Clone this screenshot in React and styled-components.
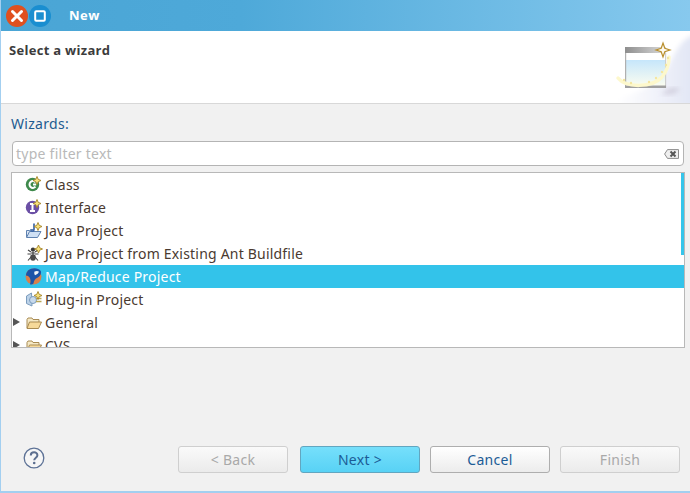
import React from 'react';
import styled, { createGlobalStyle } from 'styled-components';

const Global = createGlobalStyle`
  html, body { margin: 0; padding: 0; background: #f1f1f1; }
  * { box-sizing: border-box; }
`;

const Win = styled.div`
  width: 690px; height: 493px; display: flex; flex-direction: column; overflow: hidden;
  font-family: "Noto Sans", "Open Sans", sans-serif; font-size: 14px;
  background: #f1f1f1; border-left: 1px solid #a3cff0; border-bottom: 2px solid #a3cff0;
`;
const TitleBar = styled.div`
  height: 31px; flex: none; margin-left: -1px; display: flex; align-items: center; padding-left: 6px; gap: 1px;
  background: linear-gradient(90deg, #4aa5d5 0%, #4ea9d9 35%, #87c9ee 100%);
`;
const CircleBtn = styled.div`
  width: 22px; height: 22px; border-radius: 50%; background: ${p => p.$bg};
  display: flex; align-items: center; justify-content: center;
`;
const Title = styled.div`
  color: #fff; font-weight: 700; font-size: 13px; margin: -2px 0 0 17px; letter-spacing: .5px;
  font-family: "Open Sans", sans-serif;
`;
const Header = styled.div`
  height: 73px; flex: none; background: #fff; border-bottom: 1px solid #d8d8d8;
  display: flex; justify-content: space-between; position: relative;
`;
const HeaderTitle = styled.div`
  font-weight: 700; font-size: 13px; color: #3c3c3c; padding: 10px 0 0 8px; line-height: 18px; letter-spacing: .3px;
  font-family: "Open Sans", sans-serif;
`;
const Banner = styled.svg`
  display: block; width: 75px; height: 72px;
`;
const Body = styled.div`
  flex: 1; display: flex; flex-direction: column; padding: 0 5px 0 10px; min-height: 0;
`;
const Label = styled.div`
  color: #1d5b90; font-size: 14px; line-height: 20px; margin: 10px 0 0 0; letter-spacing: .3px;
`;
const Filter = styled.div`
  height: 25px; margin: 7px 1px 0 1px; background: #fff; border: 1px solid #b4b4b4; border-radius: 4px;
  display: flex; align-items: center; justify-content: space-between; padding: 0 4px 0 3px;
  color: #b9b9b9; font-size: 14px; letter-spacing: .25px;
`;
const Tree = styled.div`
  height: 176px; margin-top: 6px; background: #fff; border: 1px solid #b8b8b8;
  overflow: hidden; position: relative;
`;
const Row = styled.div`
  height: 23px; flex: none; display: flex; align-items: center; position: relative; padding-left: 33px;
  background: ${p => p.$sel ? '#33c3ea' : 'transparent'};
  color: ${p => p.$sel ? '#fff' : '#4a3a30'}; font-size: 14px; white-space: nowrap; letter-spacing: .2px;
`;
const RowIcon = styled.svg`
  position: absolute; left: 13px; top: 3px; width: 18px; height: 17px;
`;
const Twisty = styled.div`
  position: absolute; left: 1px; top: 7px; width: 0; height: 0;
  border-left: 7px solid #555; border-top: 4.500px solid transparent; border-bottom: 4.500px solid transparent;
`;
const Scrollbar = styled.div`
  position: absolute; right: 0; top: 0; width: 3px; height: 82px; background: #35c5ea;
`;
const Footer = styled.div`
  margin-top: auto; height: 63px; display: flex; align-items: flex-start; padding: 18px 0 0 12px;
`;
const Help = styled.svg`
  width: 22px; height: 22px; margin-top: 1px; display: block;
`;
const Buttons = styled.div`
  margin-left: auto; display: flex; gap: 10px; margin-right: 5px;
`;
const Btn = styled.div`
  width: ${p => p.$w || 120}px; height: 27px; border-radius: 3px; display: flex; align-items: center; justify-content: center;
  font-size: 14px; letter-spacing: .3px;
  ${p => p.$variant === 'primary' ? `
    background: linear-gradient(#76dffb, #58d2f5); border: 1px solid #62a6c0; color: #1c5c96; margin-left: 2px;
  ` : p.$variant === 'normal' ? `
    background: linear-gradient(#ffffff, #ececec); border: 1px solid #aeaeae; color: #1c5c96;
  ` : `
    background: linear-gradient(#fafafa, #ebebeb); border: 1px solid #cfcfcf; color: #a9a9a9;
  `}
`;

const Star = ({ x = 12, y = 4.5 }) => (
  <path d={`M${x} ${y - 4}l1.200 2.800 2.800 1.200-2.800 1.200-1.200 2.800-1.200-2.800-2.800-1.200 2.800-1.200z`} fill="#f7e27c" stroke="#a5842a" strokeWidth=".9" />
);

const ClassIcon = () => (
  <RowIcon viewBox="0 0 18 17">
    <circle cx="7.500" cy="8.500" r="6.700" fill="#3f8a4c" />
    <path d="M10.500 6.300a3.400 3.400 0 1 0 0 4.400M8 8.500h3.200" fill="none" stroke="#fff" strokeWidth="2" />
    <Star />
  </RowIcon>
);
const InterfaceIcon = () => (
  <RowIcon viewBox="0 0 18 17">
    <circle cx="7.500" cy="8.500" r="6.700" fill="#6b4fa5" />
    <path d="M5 5h5M5 12h5M7.500 5v7" stroke="#fff" strokeWidth="2" fill="none" />
    <Star />
  </RowIcon>
);
const ProjectIcon = () => (
  <RowIcon viewBox="0 0 18 17">
    <path d="M1.500 15V8.500h3l1-1h3v2" fill="#dbe6f4" stroke="#5f82b0" />
    <path d="M1.500 15.500l3-6h11.500l-3.500 6z" fill="#cfe0f4" stroke="#5f82b0" />
    <path d="M9 1.500v6c0 2-2.500 2-3.500.8" fill="none" stroke="#3d68a8" strokeWidth="1.700" />
    <Star x={13} y={4.500} />
  </RowIcon>
);
const AntIcon = () => (
  <RowIcon viewBox="0 0 18 17">
    <ellipse cx="8" cy="4.500" rx="2.200" ry="2" fill="#3a3a3a" />
    <ellipse cx="8" cy="8" rx="1.800" ry="1.800" fill="#666" />
    <ellipse cx="8" cy="12.500" rx="2.800" ry="3.200" fill="#4a4a4a" />
    <path d="M6 7L3 5M10 7l3-2M6 9H2.500M10 9h3.500M6 12l-3 3.500M10 12l3 3.500" stroke="#444" strokeWidth="1.100" fill="none" />
    <Star x={13.500} y={4} />
  </RowIcon>
);
const MapReduceIcon = () => (
  <RowIcon viewBox="0 0 18 17">
    <circle cx="8.500" cy="8.500" r="8" fill="#d9804a" />
    <path d="M3 2.500C7-.5 13-.5 15.800 3c1 3-1 6-3.800 7-2 .8-3 2.500-3.500 5.500-1 1-2.500 1.200-3.500.8C6.500 12 5 8 1 7.500c0-2 .8-3.500 2-5z" fill="#1c54a8" />
    <path d="M9.500 3.500c1.500-.7 3.500-.7 4.300 0 0 1.800-1.800 3-3.800 3.700-.8-1-.9-2.500-.5-3.700z" fill="#f1f5f8" />
  </RowIcon>
);
const PluginIcon = () => (
  <RowIcon viewBox="0 0 18 17">
    <path d="M1.500 5l5-3 .5 13-5.500-2.500z" fill="#bcd2e8" stroke="#7b9cbd" />
    <circle cx="8" cy="9" r="3.500" fill="#c7d9ec" stroke="#7b9cbd" />
    <path d="M11 7.500h5.500M11 10.500h5.500" stroke="#b9a657" strokeWidth="1.400" />
    <Star x={13} y={4.500} />
  </RowIcon>
);
const FolderIcon = () => (
  <RowIcon viewBox="0 0 18 17">
    <path d="M2 14V5.500l1-1.500h4l1 1.500h6v3" fill="#f5e9c6" stroke="#a98b52" />
    <path d="M2 14.500l2.500-6.500h12l-3 6.500z" fill="#f6d999" stroke="#a98b52" />
  </RowIcon>
);

const rows = [
  ['Class', ClassIcon], ['Interface', InterfaceIcon], ['Java Project', ProjectIcon],
  ['Java Project from Existing Ant Buildfile', AntIcon],
  ['Map/Reduce Project', MapReduceIcon, 'sel'], ['Plug-in Project', PluginIcon],
  ['General', FolderIcon, 'tw'], ['CVS', FolderIcon, 'tw'],
];

const sparkles = [[9, 49], [16, 52], [34, 51], [41, 47], [47, 41], [51, 34], [53, 27]];

export default function App() {
  return (
    <Win>
      <Global />
      <TitleBar>
        <CircleBtn $bg="#e0501f">
          <svg width="14" height="14" viewBox="0 0 14 14"><path d="M2.500 2.500l9 9M11.500 2.500l-9 9" stroke="#fff" strokeWidth="3" strokeLinecap="round" /></svg>
        </CircleBtn>
        <CircleBtn $bg="#1a8ed0">
          <svg width="12" height="12" viewBox="0 0 12 12"><rect x="1.200" y="1.200" width="9.600" height="9.600" rx="1" fill="none" stroke="#fff" strokeWidth="2" /></svg>
        </CircleBtn>
        <Title>New</Title>
      </TitleBar>
      <Header>
        <HeaderTitle>Select a wizard</HeaderTitle>
        <Banner viewBox="0 0 75 72">
          <defs>
            <linearGradient id="bg" x1="0" y1="0" x2="1" y2="0"><stop offset="0" stopColor="#fff" /><stop offset=".6" stopColor="#eef0f9" /><stop offset="1" stopColor="#e0e5f4" /></linearGradient>
            <linearGradient id="pane" x1="0" y1="0" x2="0" y2="1"><stop offset="0" stopColor="#c6e6fb" /><stop offset="1" stopColor="#fbfdf0" /></linearGradient>
            <linearGradient id="bar" x1="0" y1="0" x2="1" y2="0"><stop offset="0" stopColor="#8e8e8e" /><stop offset="1" stopColor="#dcdcdc" /></linearGradient>
            <filter id="soft" x="-20%" y="-20%" width="140%" height="140%"><feGaussianBlur stdDeviation="2.500" /></filter>
          </defs>
          <path d="M80 4C62 8 58 30 48 44 38 56 20 62 2 68v8h78z" fill="url(#bg)" filter="url(#soft)" />
          <path d="M52 58c6-1 10-2 13 0l-6 5-13 1z" fill="#c4c0d0" opacity=".6" filter="url(#soft)" />
          <rect x="10" y="16" width="41" height="6" fill="url(#bar)" />
          <rect x="10" y="22" width="41" height="35" fill="#fff" />
          <rect x="11" y="29" width="39" height="26" fill="url(#pane)" />
          <rect x="10" y="22" width="1.200" height="35" fill="#b0b0b0" />
          <rect x="50" y="22" width="1.200" height="35" fill="#cfcfcf" />
          <rect x="10" y="54.500" width="41" height="2.500" fill="#a0a0a0" />
          <path d="M3 47c8 10 34 10 44-1 5-6 7-12 7-20" fill="none" stroke="#fdf8cc" strokeWidth="3.500" strokeLinecap="round" />
          {sparkles.map(([x, y]) => <circle key={x} cx={x} cy={y} r="1.200" fill="#f4e6a0" />)}
          <path d="M48 12l1.800 5.200 5.200 1.800-5.200 1.800-1.800 5.200-1.800-5.200-5.200-1.800 5.200-1.800z" fill="#fdfaf0" stroke="#b98f2e" strokeWidth="1.200" />
        </Banner>
      </Header>
      <Body>
        <Label>Wizards:</Label>
        <Filter>
          <span>type filter text</span>
          <svg width="15" height="10" viewBox="0 0 15 10">
            <path d="M3.500.600h11v8.800h-11L.600 5z" fill="#efefef" stroke="#8c8c8c" />
            <path d="M6.500 2.500l5 5M11.500 2.500l-5 5" stroke="#555" strokeWidth="2" />
          </svg>
        </Filter>
        <Tree>
          {rows.map(([t, I, f]) => (
            <Row key={t} $sel={f === 'sel'}>
              {f === 'tw' && <Twisty />}
              <I />
              {t}
            </Row>
          ))}
          <Scrollbar />
        </Tree>
        <Footer>
          <Help viewBox="0 0 22 22">
            <circle cx="11" cy="11" r="9.800" fill="#f6f6f6" stroke="#5d7296" strokeWidth="1.300" />
            <path d="M7.800 8.500c0-4.200 6.600-4.200 6.600-.2 0 2.400-3.200 2.400-3.200 5" fill="none" stroke="#5d6f8f" strokeWidth="2" />
            <circle cx="11.200" cy="16" r="1.300" fill="#5d6f8f" />
          </Help>
          <Buttons>
            <Btn $w={110} $variant="disabled">&lt; Back</Btn>
            <Btn $variant="primary">Next &gt;</Btn>
            <Btn $variant="normal">Cancel</Btn>
            <Btn $variant="disabled">Finish</Btn>
          </Buttons>
        </Footer>
      </Body>
    </Win>
  );
}
